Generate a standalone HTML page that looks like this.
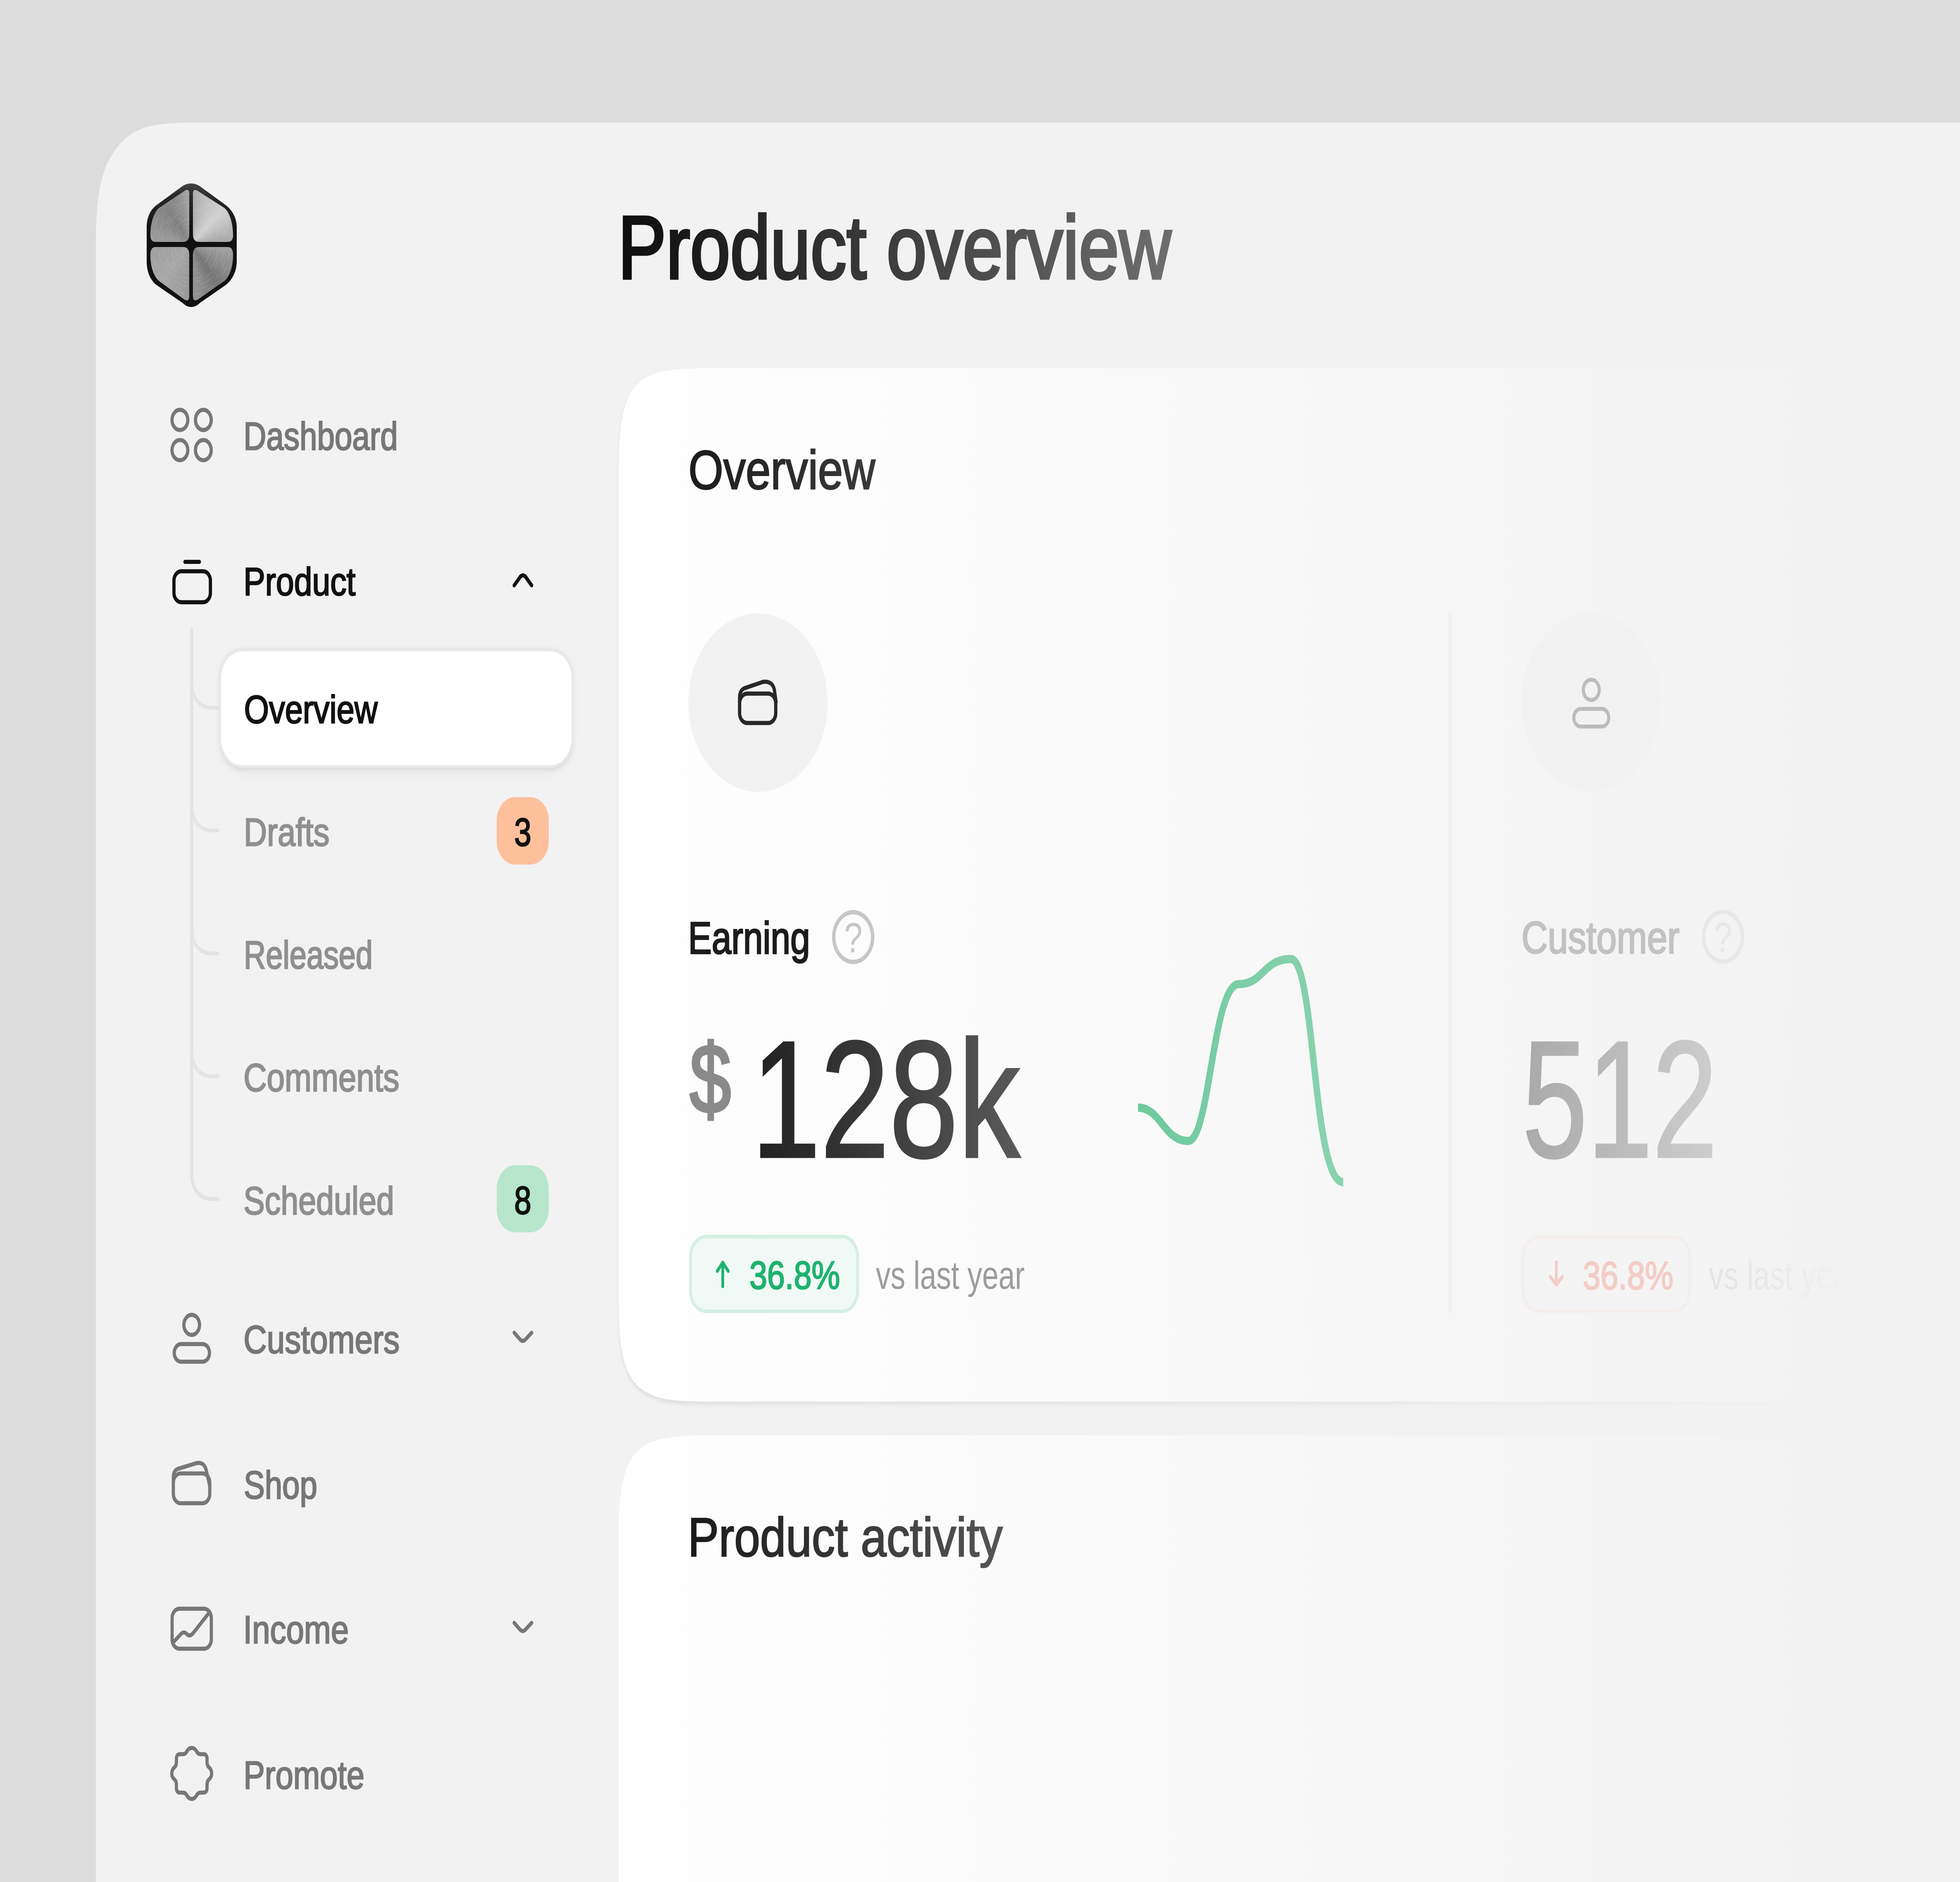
<!DOCTYPE html>
<html><head><meta charset="utf-8"><title>Product overview</title>
<style>
html,body{margin:0;padding:0;width:100%;height:100%;overflow:hidden;background:#dcdcdc}
svg{display:block;position:fixed;left:0;top:0;width:100vw;height:100vh}
text{font-family:"Liberation Sans",sans-serif}
.n{font-size:100px;fill:#777;stroke:#777;stroke-width:3px}
.s{font-size:100px;fill:#8f8f8f;stroke:#8f8f8f;stroke-width:3px}
.d{font-size:100px;fill:#111;stroke:#111;stroke-width:3px}
.i{fill:none;stroke:#777;stroke-width:10.5;stroke-linecap:round;stroke-linejoin:round}
.t{fill:none;stroke:#e4e4e4;stroke-width:10;stroke-linecap:round}
</style></head>
<body>
<svg viewBox="0 0 6400 4800" preserveAspectRatio="none" xmlns="http://www.w3.org/2000/svg">
<defs>
<linearGradient id="cg" gradientUnits="userSpaceOnUse" x1="2020" y1="0" x2="6080" y2="0">
<stop offset="0" stop-color="#fefefe"/><stop offset=".25" stop-color="#fbfbfb"/><stop offset=".5" stop-color="#f8f8f8"/><stop offset=".75" stop-color="#f5f5f5"/><stop offset="1" stop-color="#f2f2f2"/></linearGradient>
<linearGradient id="sh" gradientUnits="userSpaceOnUse" x1="2020" y1="0" x2="6000" y2="0">
<stop offset="0" stop-color="#dedede"/><stop offset=".6" stop-color="#e8e8e8"/><stop offset="1" stop-color="#f2f2f2"/></linearGradient>
<linearGradient id="gt" gradientUnits="userSpaceOnUse" x1="2033" y1="0" x2="3829" y2="0"><stop offset="0" stop-color="#0e0e0e"/><stop offset="1" stop-color="#6e6e6e"/></linearGradient>
<linearGradient id="go" gradientUnits="userSpaceOnUse" x1="2254" y1="0" x2="2858" y2="0"><stop offset="0" stop-color="#1c1c1c"/><stop offset="1" stop-color="#3a3a3a"/></linearGradient>
<linearGradient id="ga" gradientUnits="userSpaceOnUse" x1="2254" y1="0" x2="3274" y2="0"><stop offset="0" stop-color="#1a1a1a"/><stop offset="1" stop-color="#555"/></linearGradient>
<linearGradient id="gk" gradientUnits="userSpaceOnUse" x1="2479" y1="0" x2="3341" y2="0"><stop offset="0" stop-color="#222"/><stop offset="1" stop-color="#5a5a5a"/></linearGradient>
<linearGradient id="g5" gradientUnits="userSpaceOnUse" x1="4984" y1="0" x2="5592" y2="0"><stop offset="0" stop-color="#aaa"/><stop offset="1" stop-color="#cdcdcd"/></linearGradient>
<linearGradient id="gs" gradientUnits="userSpaceOnUse" x1="3716" y1="0" x2="4386" y2="0"><stop offset="0" stop-color="#6cc99e"/><stop offset="1" stop-color="#8bd3b0"/></linearGradient>
<linearGradient id="gv" gradientUnits="userSpaceOnUse" x1="5582" y1="0" x2="6075" y2="0"><stop offset="0" stop-color="#e4e4e4"/><stop offset="1" stop-color="#f2f2f2"/></linearGradient>
<linearGradient id="lo" gradientUnits="userSpaceOnUse" x1="0" y1="468" x2="0" y2="783"><stop offset="0" stop-color="#444"/><stop offset=".1" stop-color="#2a2a2a"/><stop offset=".4" stop-color="#111"/><stop offset="1" stop-color="#111"/></linearGradient>
<clipPath id="lq" clipPathUnits="userSpaceOnUse">
<path d="M618 494 Q618 480 604 486 L520 530 C502 541 491 570 491 600 Q491 617 508 617 L598 617 Q618 617 618 597 Z"/>
<path d="M630 494 Q630 480 644 486 L732 530 C750 541 761 570 761 600 Q761 617 744 617 L650 617 Q630 617 630 597 Z"/>
<path d="M618 650 Q618 630 598 630 L508 630 Q491 630 491 650 C491 680 502 706 520 717 L600 763 Q618 772 618 755 Z"/>
<path d="M630 650 Q630 630 650 630 L744 630 Q761 630 761 650 C761 680 750 706 732 717 L648 763 Q630 772 630 755 Z"/>
</clipPath>
<filter id="b1" x="-5%" y="-5%" width="110%" height="110%"><feGaussianBlur stdDeviation="5"/></filter>
<filter id="b2" x="-10%" y="-20%" width="120%" height="140%"><feGaussianBlur stdDeviation="12"/></filter>
</defs>

<rect width="6400" height="4800" fill="#dcdcdc"/>
<path d="M313 4800 V620 C313 470 340 420 383 375 C430 330 480 313 620 313 H6400 V4800 Z" fill="#f2f2f2"/>

<!-- logo -->
<path d="M624 468 C610 468 600 472 590 478 L513 522 C490 535 479 555 479 580 V667 C479 692 490 715 513 728 L597 773 C606 780 615 783 624 783 C634 783 643 780 652 773 L735 728 C758 715 773 692 773 667 V580 C773 555 758 535 735 522 L658 478 C648 472 638 468 624 468 Z" fill="url(#lo)"/>
<foreignObject x="478" y="468" width="296" height="316" clip-path="url(#lq)">
<div xmlns="http://www.w3.org/1999/xhtml" style="width:296px;height:316px;background:conic-gradient(from 0deg at 146px 155px,#ababab 0deg,#c0c0c0 25deg,#d2d2d2 50deg,#b8b8b8 72deg,#9f9f9f 95deg,#8a8a8a 120deg,#767676 140deg,#8d8d8d 165deg,#9c9c9c 190deg,#a8a8a8 225deg,#a0a0a0 270deg,#8c8c8c 300deg,#828282 320deg,#959595 345deg,#ababab 360deg)"></div>
</foreignObject>
<g clip-path="url(#lq)" fill="none" stroke="#fff" stroke-opacity=".16" stroke-width="1.6">
<circle cx="624" cy="623" r="22" stroke-dasharray="18 9"/><circle cx="624" cy="623" r="31" stroke-dasharray="26 12"/>
<circle cx="624" cy="623" r="42" stroke-dasharray="40 20"/><circle cx="624" cy="623" r="53" stroke-dasharray="20 26"/>
<circle cx="624" cy="623" r="65" stroke-dasharray="60 24"/><circle cx="624" cy="623" r="76" stroke-dasharray="14 30"/>
<circle cx="624" cy="623" r="88" stroke-dasharray="70 34"/><circle cx="624" cy="623" r="97" stroke-dasharray="22 18"/>
<circle cx="624" cy="623" r="108" stroke-dasharray="50 40"/><circle cx="624" cy="623" r="118" stroke-dasharray="16 28"/>
<circle cx="624" cy="623" r="128" stroke-dasharray="34 22"/><circle cx="624" cy="623" r="138" stroke-dasharray="18 34"/>
<circle cx="624" cy="623" r="148" stroke-dasharray="40 30"/><circle cx="624" cy="623" r="158" stroke-dasharray="20 16"/>
</g>

<!-- tree -->
<path class="t" d="M626 1606 V3000"/>
<path class="t" d="M626 1741 C626 1782 655 1805 690 1805 H716"/>
<path class="t" d="M626 2054 C626 2095 655 2118 690 2118 H712"/>
<path class="t" d="M626 2368 C626 2409 655 2432 690 2432 H712"/>
<path class="t" d="M626 2681 C626 2722 655 2745 690 2745 H712"/>
<path class="t" d="M626 2994 C626 3035 655 3058 690 3058 H712"/>

<!-- nav icons -->
<g class="i">
<circle cx="587.5" cy="1071" r="25.7"/><circle cx="664" cy="1071" r="25.7"/>
<circle cx="587.5" cy="1148" r="25.7"/><circle cx="664" cy="1148" r="25.7"/>
</g>
<g class="i" style="stroke:#111">
<rect x="568" y="1457" width="119" height="79" rx="24"/><path d="M604 1433 H651"/>
<path d="M1679 1493 L1699 1471 Q1707 1464 1716 1471 L1736 1493"/>
</g>
<g class="i">
<circle cx="626" cy="3379" r="25.5"/><rect x="569" y="3428" width="115" height="45" rx="22.5"/>
<path d="M1679 3399 L1698 3416 Q1707 3424 1716 3416 L1736 3399"/>
<rect x="566" y="3758" width="119" height="76" rx="24"/>
<path d="M566 3782 V3768 Q566 3750 582 3746 L640 3732 Q668 3727 674 3752 L685 3790"/>
<rect x="562" y="4103" width="128" height="102" rx="24"/>
<path d="M569 4186 L588 4170 Q600 4158 610 4168 Q620 4176 632 4164 L681 4115"/>
<path d="M1679 4139 L1698 4156 Q1707 4164 1716 4156 L1736 4139"/>
<g transform="translate(626,4523)"><path d="M0 -65 C8 -65 12 -61 16 -56 C20 -50 24 -49 32 -49 L38 -49 C46 -49 50 -45 50 -37 L50 -31 C50 -23 51 -19 57 -15 C62 -11 65 -7 65 0 C65 7 62 11 57 15 C51 19 50 23 50 31 L50 37 C50 45 46 49 38 49 L32 49 C24 49 20 50 16 56 C12 61 8 65 0 65 C-8 65 -12 61 -16 56 C-20 50 -24 49 -32 49 L-38 49 C-46 49 -50 45 -50 37 L-50 31 C-50 23 -51 19 -57 15 C-62 11 -65 7 -65 0 C-65 -7 -62 -11 -57 -15 C-51 -19 -50 -23 -50 -31 L-50 -37 C-50 -45 -46 -49 -38 -49 L-32 -49 C-24 -49 -20 -50 -16 -56 C-12 -61 -8 -65 0 -65 Z"/></g>
</g>

<!-- nav text -->
<text class="n" x="795" y="1147" textLength="504" lengthAdjust="spacingAndGlyphs">Dashboard</text>
<text class="d" x="795" y="1518" textLength="366" lengthAdjust="spacingAndGlyphs">Product</text>
<text class="n" x="795" y="3451" textLength="510" lengthAdjust="spacingAndGlyphs">Customers</text>
<text class="n" x="796" y="3822" textLength="240" lengthAdjust="spacingAndGlyphs">Shop</text>
<text class="n" x="794" y="4191" textLength="345" lengthAdjust="spacingAndGlyphs">Income</text>
<text class="n" x="795" y="4562" textLength="395" lengthAdjust="spacingAndGlyphs">Promote</text>

<!-- active pill -->
<rect x="724" y="1670" width="1140" height="297" rx="72" fill="#000" fill-opacity=".09" filter="url(#b2)"/>
<rect x="717" y="1655" width="1154" height="306" rx="74" fill="#dcdcdc" filter="url(#b1)"/>
<rect x="719" y="1658" width="1150" height="297" rx="72" fill="#fff" stroke="#e9e9e9" stroke-width="6"/>
<text class="d" x="797" y="1844" textLength="436" lengthAdjust="spacingAndGlyphs">Overview</text>

<text class="s" x="796" y="2157" textLength="280" lengthAdjust="spacingAndGlyphs">Drafts</text>
<text class="s" x="796" y="2470" textLength="421" lengthAdjust="spacingAndGlyphs">Released</text>
<text class="s" x="795" y="2783" textLength="509" lengthAdjust="spacingAndGlyphs">Comments</text>
<text class="s" x="795" y="3097" textLength="492" lengthAdjust="spacingAndGlyphs">Scheduled</text>

<rect x="1622" y="2033" width="170" height="172" rx="60" fill="#fec09b"/>
<rect x="1622" y="2972" width="170" height="171" rx="60" fill="#b7e6cd"/>
<text class="d" x="1707" y="2157" text-anchor="middle">3</text>
<text class="d" x="1707" y="3096" text-anchor="middle">8</text>

<!-- title -->
<text x="2018" y="710" font-size="228" textLength="1806" lengthAdjust="spacingAndGlyphs" fill="url(#gt)" stroke="url(#gt)" stroke-width="7">Product overview</text>

<!-- card 1 -->
<path d="M2020 1189 C2020 1059 2045 999 2095 971 C2140 944 2200 939 2330 939 H6080 V3575 H2330 C2200 3575 2140 3570 2095 3543 C2045 3515 2020 3455 2020 3325 Z" fill="url(#sh)" transform="translate(0,7)" filter="url(#b1)"/>
<path d="M2020 1189 C2020 1059 2045 999 2095 971 C2140 944 2200 939 2330 939 H6080 V3575 H2330 C2200 3575 2140 3570 2095 3543 C2045 3515 2020 3455 2020 3325 Z" fill="url(#cg)"/>
<!-- card 2 -->
<path d="M2020 3911 C2020 3781 2045 3721 2095 3693 C2140 3666 2200 3661 2330 3661 H6080 V4800 H2020 Z" fill="url(#cg)"/>

<text x="2248" y="1247" font-size="140" textLength="610" lengthAdjust="spacingAndGlyphs" fill="url(#go)" stroke="url(#go)" stroke-width="3">Overview</text>
<text x="2246" y="3969" font-size="140" textLength="1028" lengthAdjust="spacingAndGlyphs" fill="url(#ga)" stroke="url(#ga)" stroke-width="3">Product activity</text>

<!-- column 1 -->
<circle cx="2475" cy="1792" r="227.5" fill="#f2f2f2"/>
<g fill="none" stroke="#282828" stroke-width="10.7" stroke-linecap="round" stroke-linejoin="round">
<rect x="2415" y="1769" width="118" height="75" rx="25"/>
<path d="M2415 1796 V1780 Q2415 1760 2432 1755 L2492 1739 Q2524 1736 2529 1762 L2534 1790"/>
</g>
<text x="2247" y="2432" font-size="115" textLength="398" lengthAdjust="spacingAndGlyphs" fill="#1c1c1c" stroke="#1c1c1c" stroke-width="3.5">Earning</text>
<circle cx="2786" cy="2390" r="63.5" fill="none" stroke="#c6c6c6" stroke-width="11"/>
<text x="2786" y="2429" font-size="108" text-anchor="middle" fill="#c6c6c6">?</text>
<text x="2252" y="2838" font-size="250" textLength="135" lengthAdjust="spacingAndGlyphs" fill="#8a8a8a" stroke="#8a8a8a" stroke-width="7">$</text>
<text x="2454" y="2951" font-size="425" textLength="877" lengthAdjust="spacingAndGlyphs" fill="url(#gk)" stroke="url(#gk)" stroke-width="5">128k</text>
<path d="M3716 2825 C3790 2825 3800 2910 3880 2910 C3950 2910 3960 2510 4045 2510 C4125 2510 4125 2446 4215 2446 C4295 2446 4285 3015 4386 3015" fill="none" stroke="url(#gs)" stroke-width="21"/>
<rect x="2254.5" y="3153.5" width="546" height="191" rx="52" fill="#f0f9f5" stroke="#d5efe3" stroke-width="9"/>
<path d="M2360 3281 V3222 M2342 3242 L2360 3220 L2378 3242" fill="none" stroke="#1fb26e" stroke-width="9" stroke-linecap="round" stroke-linejoin="round"/>
<text x="2447" y="3287" font-size="100" textLength="296" lengthAdjust="spacingAndGlyphs" fill="#1fb26e" stroke="#1fb26e" stroke-width="3">36.8%</text>
<text x="2860" y="3287" font-size="100" textLength="486" lengthAdjust="spacingAndGlyphs" fill="#9c9c9c">vs last year</text>

<!-- divider -->
<rect x="4730" y="1563" width="10" height="1785" fill="#efefef"/>

<!-- column 2 -->
<circle cx="5195" cy="1791" r="228" fill="#f2f2f2"/>
<g fill="none" stroke="#bcbcbc" stroke-width="10">
<circle cx="5196" cy="1759.5" r="26"/><rect x="5139" y="1808" width="114" height="45" rx="22.5"/>
</g>
<text x="4968" y="2431" font-size="115" textLength="516" lengthAdjust="spacingAndGlyphs" fill="#c2c2c2" stroke="#c2c2c2" stroke-width="3.5">Customer</text>
<circle cx="5626" cy="2389" r="63.5" fill="none" stroke="#e8e8e8" stroke-width="11"/>
<text x="5626" y="2428" font-size="108" text-anchor="middle" fill="#e8e8e8">?</text>
<text x="4971" y="2951" font-size="425" textLength="637" lengthAdjust="spacingAndGlyphs" fill="url(#g5)" stroke="url(#g5)" stroke-width="5">512</text>
<rect x="4972.5" y="3155.5" width="545" height="188" rx="52" fill="#f5f4f4" stroke="#f4eeec" stroke-width="9"/>
<path d="M5082 3219 V3275 M5062 3256 L5082 3277 L5102 3256" fill="none" stroke="#f3cdc7" stroke-width="9" stroke-linecap="round" stroke-linejoin="round"/>
<text x="5168" y="3288" font-size="100" textLength="296" lengthAdjust="spacingAndGlyphs" fill="#f3ccc6" stroke="#f3ccc6" stroke-width="3">36.8%</text>
<text x="5580" y="3288" font-size="100" textLength="490" lengthAdjust="spacingAndGlyphs" fill="url(#gv)">vs last year</text>
</svg>
</body></html>
